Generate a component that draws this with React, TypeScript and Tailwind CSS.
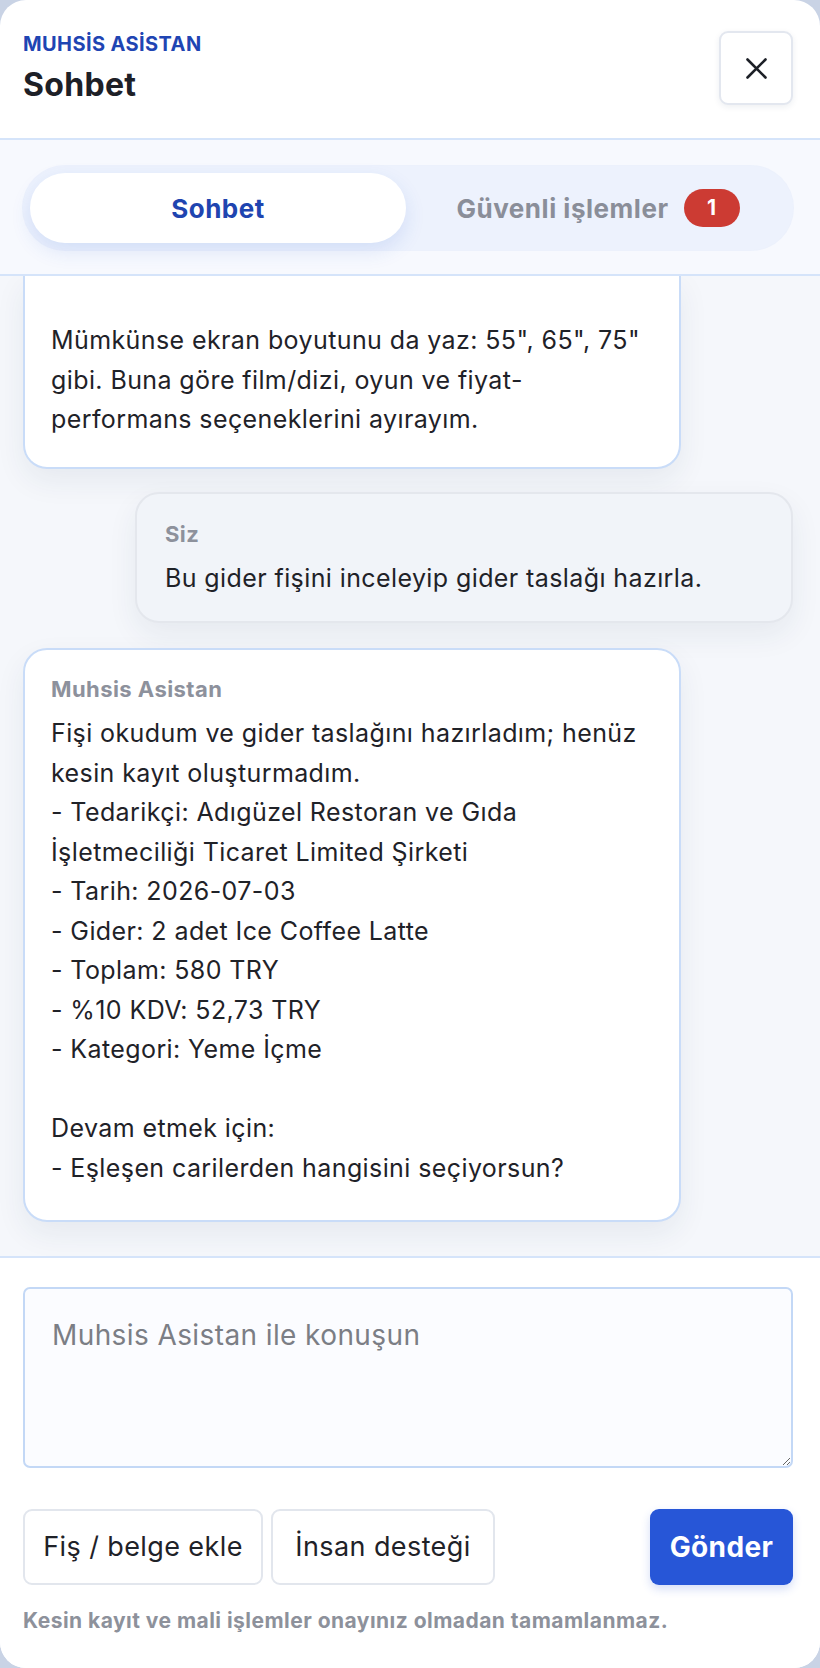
import React from "react";

const line = "whitespace-nowrap";

function Label({ children }: { children: React.ReactNode }) {
  return (
    <div className="text-[22px] leading-[26px] font-bold text-[#8d919c] tracking-[0.02em]">
      {children}
    </div>
  );
}

export default function App() {
  const msg3 = [
    "Fişi okudum ve gider taslağını hazırladım; henüz",
    "kesin kayıt oluşturmadım.",
    "- Tedarikçi: Adıgüzel Restoran ve Gıda",
    "İşletmeciliği Ticaret Limited Şirketi",
    "- Tarih: 2026-07-03",
    "- Gider: 2 adet Ice Coffee Latte",
    "- Toplam: 580 TRY",
    "- %10 KDV: 52,73 TRY",
    "- Kategori: Yeme İçme",
    "",
    "Devam etmek için:",
    "- Eşleşen carilerden hangisini seçiyorsun?",
  ];
  return (
    <div className="w-[820px] h-[1668px] bg-[#c9d3e5] font-[Inter,'Noto_Sans',sans-serif] tracking-[0.025em]">
      <div className="w-full h-full bg-white rounded-[26px] overflow-hidden flex flex-col">
        {/* Header */}
        <div className="h-[140px] shrink-0 border-b-2 border-[#d5e4fa] flex justify-between items-start pl-[23px] pr-[27px] pt-[31px]">
          <div>
            <div className="text-[20px] leading-[26px] font-bold text-[#1f45b3] tracking-[0.02em]">MUHSİS ASİSTAN</div>
            <div className="mt-[8px] text-[32px] leading-[40px] font-bold text-[#1d2027] tracking-[0.01em]">Sohbet</div>
          </div>
          <button className="w-[74px] h-[74px] rounded-[9px] border-2 border-[#e3e7ef] bg-white shadow-[0_2px_6px_rgba(30,50,90,0.08)] flex items-center justify-center">
            <svg width="21" height="21" viewBox="0 0 21 21" fill="none">
              <path d="M1.5 1.5L19.5 19.5M19.5 1.5L1.5 19.5" stroke="#1d2027" strokeWidth="2.6" strokeLinecap="round" />
            </svg>
          </button>
        </div>

        {/* Tabs */}
        <div className="shrink-0 bg-[#f7f9fe] border-b-2 border-[#d5e4fa] pl-[23px] pr-[27px] pt-[26px] pb-[24px]">
          <div className="h-[84px] rounded-full bg-[#edf2fd] p-[7px] grid grid-cols-2 gap-[4px] shadow-[0_0_0_1px_rgba(220,230,250,0.4)]">
            <div className="rounded-full bg-white shadow-[0_8px_20px_rgba(40,90,210,0.13)] flex items-center justify-center text-[26px] font-bold text-[#1f45b0] tracking-[0.02em]">
              Sohbet
            </div>
            <div className="flex items-center justify-center gap-[15px]">
              <span className="text-[26px] font-bold text-[#8a8e99] tracking-[0.02em]">Güvenli işlemler</span>
              <span className="w-[56px] h-[38px] rounded-full bg-[#cc3b33] text-white text-[21px] font-bold flex items-center justify-center tracking-normal">1</span>
            </div>
          </div>
        </div>

        {/* Messages */}
        <div className="flex-1 min-h-0 overflow-hidden bg-[#f5f7fb] pl-[23px] pr-[27px] flex flex-col text-[25px] leading-[39.5px] text-[#1f2228]">
          <div className="w-[658px] shrink-0 bg-white border-2 border-t-0 border-[#c9dcf8] rounded-b-[24px] pl-[26px] pr-[20px] pt-[45px] pb-[27px] shadow-[0_12px_30px_rgba(30,50,90,0.07)]">
            <div className={line}>Mümkünse ekran boyutunu da yaz: 55", 65", 75"</div>
            <div className={line}>gibi. Buna göre film/dizi, oyun ve fiyat-</div>
            <div className={line}>performans seçeneklerini ayırayım.</div>
          </div>

          <div className="mt-[23px] w-[658px] shrink-0 self-end bg-[#f1f4f9] border-2 border-[#e4e7ed] rounded-[24px] pl-[28px] pr-[20px] pt-[27px] pb-[23px] shadow-[0_12px_30px_rgba(30,50,90,0.07)]">
            <Label>Siz</Label>
            <div className={`${line} mt-[12px]`}>Bu gider fişini inceleyip gider taslağı hazırla.</div>
          </div>

          <div className="mt-[25px] w-[658px] shrink-0 bg-white border-2 border-[#c9dcf8] rounded-[24px] pl-[26px] pr-[20px] pt-[26px] pb-[32px] shadow-[0_12px_30px_rgba(30,50,90,0.07)]">
            <Label>Muhsis Asistan</Label>
            <div className="mt-[12px]">
              {msg3.map((t, i) => (
                <div key={i} className={`${line} h-[39.5px]`}>{t}</div>
              ))}
            </div>
          </div>
        </div>

        {/* Composer */}
        <div className="shrink-0 h-[412px] border-t-2 border-[#d5e4fa] bg-white pl-[23px] pr-[27px] pt-[29px]">
          <textarea
            placeholder="Muhsis Asistan ile konuşun"
            className="block w-full h-[181px] rounded-[7px] border-2 border-[#c3d8f6] bg-[#fbfcff] px-[27px] pt-[27px] text-[28px] leading-[39.5px] text-[#1f2228] placeholder:text-[#7b7e85] outline-none"
          />
          <div className="mt-[41px] flex items-center">
            <button className="h-[76px] w-[240px] rounded-[9px] border-2 border-[#e2e6ed] bg-white text-[27px] text-[#1f2228]">
              Fiş / belge ekle
            </button>
            <button className="ml-[8px] h-[76px] w-[224px] rounded-[9px] border-2 border-[#e2e6ed] bg-white text-[27px] text-[#1f2228]">
              İnsan desteği
            </button>
            <button className="ml-auto h-[76px] w-[143px] rounded-[9px] bg-[#2756d7] text-white text-[28px] font-bold shadow-[0_4px_10px_rgba(39,86,215,0.2)]">
              Gönder
            </button>
          </div>
          <div className="mt-[22px] text-[21px] leading-[28px] font-bold text-[#8d919b] tracking-[0.022em]">
            Kesin kayıt ve mali işlemler onayınız olmadan tamamlanmaz.
          </div>
        </div>
      </div>
    </div>
  );
}
